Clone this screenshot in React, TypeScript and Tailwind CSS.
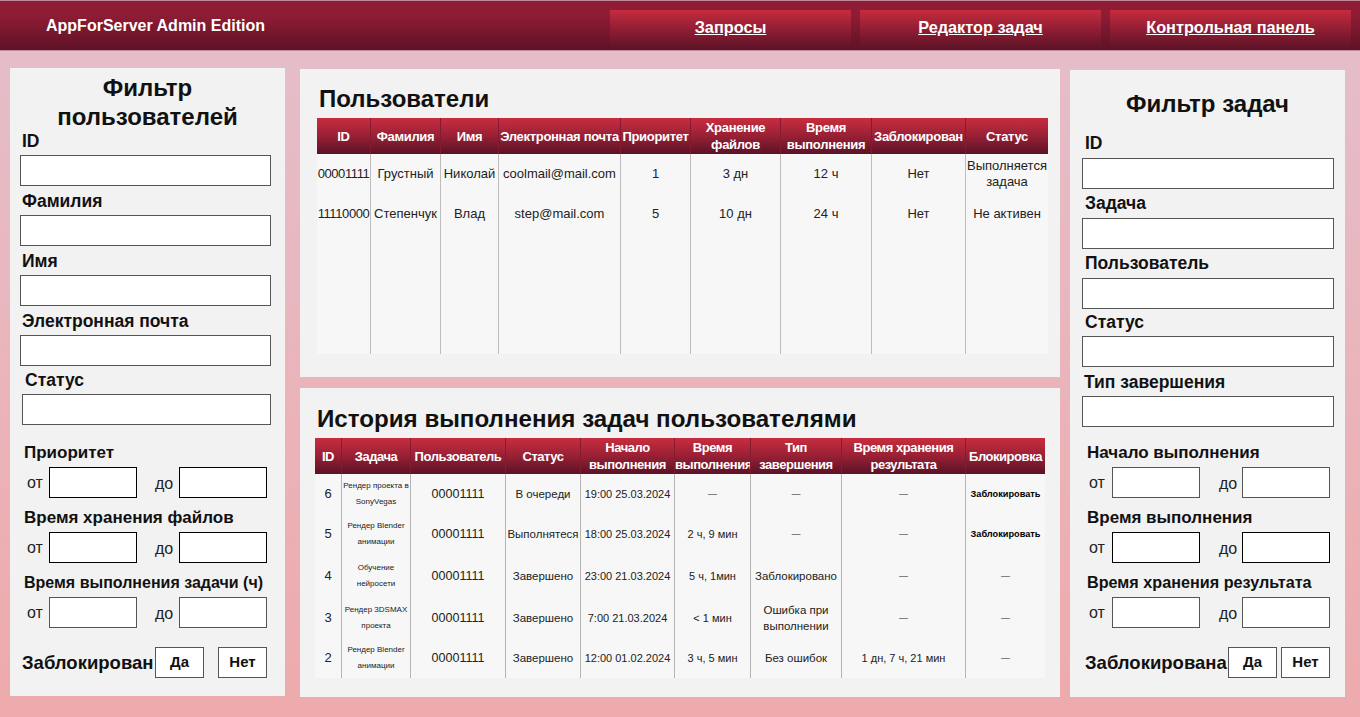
const font = { fontFamily: '"Liberation Sans", Arial, sans-serif' };

const navItems = ["Запросы", "Редактор задач", "Контрольная панель"];

const userCols = [54, 70, 58, 122, 70, 90, 91, 94, 82];
const userHead = ["ID", "Фамилия", "Имя", "Электронная почта", "Приоритет", "Хранение файлов", "Время выполнения", "Заблокирован", "Статус"];
const users = [
  ["00001111", "Грустный", "Николай", "coolmail@mail.com", "1", "3 дн", "12 ч", "Нет", "Выполняется задача"],
  ["11110000", "Степенчук", "Влад", "step@mail.com", "5", "10 дн", "24 ч", "Нет", "Не активен"],
];

const taskCols = [27, 69, 95, 75, 94, 76, 91, 124, 79];
const taskHead = ["ID", "Задача", "Пользователь", "Статус", "Начало выполнения", "Время выполнения", "Тип завершения", "Время хранения результата", "Блокировка"];
const tasks = [
  { h: "h-[40px]", cells: ["6", "Рендер проекта в SonyVegas", "00001111", "В очереди", "19:00 25.03.2024", "—", "—", "—", "Заблокировать"] },
  { h: "h-[40px]", cells: ["5", "Рендер Blender анимации", "00001111", "Выполнятеся", "18:00 25.03.2024", "2 ч, 9 мин", "—", "—", "Заблокировать"] },
  { h: "h-[44px]", cells: ["4", "Обучение нейросети", "00001111", "Завершено", "23:00 21.03.2024", "5 ч, 1мин", "Заблокировано", "—", "—"] },
  { h: "h-[40px]", cells: ["3", "Рендер 3DSMAX проекта", "00001111", "Завершено", "7:00 21.03.2024", "< 1 мин", "Ошибка при выполнении", "—", "—"] },
  { h: "h-[40px]", cells: ["2", "Рендер Blender анимации", "00001111", "Завершено", "12:00 01.02.2024", "3 ч, 5 мин", "Без ошибок", "1 дн, 7 ч, 21 мин", "—"] },
];

function taskCellClass(c: string, i: number) {
  if (c === "—") return "text-[9px]";
  if (i === 0) return "text-[13px]";
  if (i === 1) return "text-[8px] leading-[16px]";
  if (i === 2) return "text-[12.5px]";
  if (i === 4 || i === 5 || i === 7) return "text-[11px]";
  if (i === 8) return "text-[9.2px] font-bold text-black";
  return "";
}

function Field({ label, labelClass = "pl-[2px] leading-[27px]", inputClass = "w-[251px]", rowClass = "mb-[2px]" }: { label: string; labelClass?: string; inputClass?: string; rowClass?: string }) {
  return (
    <div className={rowClass}>
      <div className={`h-[27px] text-[17.5px] font-bold text-[#111] ${labelClass}`}>{label}</div>
      <input className={`block h-[31px] bg-white border border-[#555] ${inputClass}`} />
    </div>
  );
}

function Range({ label, labelClass = "text-[17px]", dark = false, left, otClass, gapClass }: { label: string; labelClass?: string; dark?: boolean; left: string; otClass: string; gapClass: string }) {
  const box = `block h-[31px] w-[88px] bg-white border ${dark ? "border-black" : "border-[#555]"}`;
  return (
    <div className="mb-[7px]">
      <div className={`h-[27px] leading-[25px] font-bold text-[#111] ${labelClass} ${left}`}>{label}</div>
      <div className="flex items-center text-[16px] text-[#222]">
        <span className={`pl-[7px] ${otClass}`}>от</span>
        <input className={box} />
        <span className={`pt-[2px] ${gapClass}`}>до</span>
        <input className={box} />
      </div>
    </div>
  );
}

function HeadCell({ text, last, tight }: { text: string; last: boolean; tight?: boolean }) {
  return (
    <th className={`h-[36px] p-0 bg-linear-to-b from-[#c92d3f] via-[#982035] to-[#5c1226] text-white text-[13px] leading-[17px] font-bold text-center align-middle overflow-hidden ${tight ? "tracking-[-0.45px]" : "tracking-[-0.3px]"} ${last ? "" : "border-r border-[#85192e]"}`}>
      {text}
    </th>
  );
}

export default function App() {
  return (
    <div style={font} className="w-[1360px] h-[717px] overflow-hidden bg-linear-to-b from-[#e4bfcb] to-[#eeaaac]">
      {/* Top bar */}
      <div className="h-[51px] flex border-t border-[#c08a98] border-b bg-linear-to-b from-[#8e1c34] from-30% to-[#5e1226]">
        <div className="w-[610px] pl-[46px] pt-[15px] text-white text-[16px] leading-[20px] font-bold">AppForServer Admin Edition</div>
        <div className="flex gap-[9px] pt-[9px]">
          {navItems.map((item) => (
            <a key={item} className="w-[241px] h-[40px] flex justify-center pt-[7px] bg-linear-to-b from-[#c62c3d] via-[#8f1d33] to-[#5c1226] text-white text-[16.3px] leading-[20px] font-bold underline">
              {item}
            </a>
          ))}
        </div>
      </div>

      <div className="flex pl-[10px]">
        {/* User filter */}
        <aside className="w-[275px] h-[628px] mt-[17px] pl-[10px] bg-[#f2f2f2]">
          <h2 className="h-[60px] pt-[5px] pr-[10px] text-[24px] leading-[29px] font-bold text-center text-[#111]">Фильтр пользователей</h2>
          <Field label="ID" />
          <Field label="Фамилия" />
          <Field label="Имя" />
          <Field label="Электронная почта" rowClass="mb-[1px]" />
          <Field label="Статус" labelClass="pl-[5px] leading-[27px]" inputClass="w-[249px] ml-[2px]" />
          <div className="h-[13px]" />
          <Range label="Приоритет" dark left="pl-[4px]" otClass="w-[29px]" gapClass="w-[42px] pl-[18px]" />
          <Range label="Время хранения файлов" dark left="pl-[4px]" otClass="w-[29px]" gapClass="w-[42px] pl-[18px]" />
          <Range label="Время выполнения задачи (ч)" labelClass="text-[16px]" left="pl-[4px]" otClass="w-[29px]" gapClass="w-[42px] pl-[18px]" />
          <div className="flex items-center mt-[19px]">
            <span className="w-[135px] pl-[2px] text-[18.5px] font-bold text-[#111]">Заблокирован</span>
            <button className="w-[49px] h-[31px] bg-white border border-[#555] text-[15px] font-bold text-[#111]">Да</button>
            <button className="w-[49px] h-[31px] ml-[14px] bg-white border border-[#555] text-[15px] font-bold text-[#111]">Нет</button>
          </div>
        </aside>

        {/* Tables */}
        <main className="w-[760px] ml-[15px] mt-[18px] flex flex-col gap-[11px]">
          <section className="h-[308px] pl-[17px] bg-[#f2f2f2]">
            <h2 className="pt-[15px] mb-[5px] ml-[2px] text-[24px] leading-[29px] font-bold text-[#111]">Пользователи</h2>
            <table className="table-fixed w-[731px] border-separate border-spacing-0">
              <colgroup>
                {userCols.map((w, i) => (
                  <col key={i} style={{ width: w }} />
                ))}
              </colgroup>
              <thead>
                <tr>
                  {userHead.map((t, i) => (
                    <HeadCell key={t} text={t} last={i === userHead.length - 1} />
                  ))}
                </tr>
              </thead>
              <tbody className="bg-[#f7f7f7] text-[13px] leading-[16px] text-[#222] text-center">
                {users.map((row) => (
                  <tr key={row[0]}>
                    {row.map((c, i) => (
                      <td key={i} className={`h-[40px] p-0 overflow-hidden ${i === 0 ? "tracking-[-0.4px]" : ""} ${i < row.length - 1 ? "border-r border-[#bdbdbd]" : ""}`}>
                        {c}
                      </td>
                    ))}
                  </tr>
                ))}
                <tr>
                  {userCols.map((_, i) => (
                    <td key={i} className={`h-[120px] p-0 ${i < userCols.length - 1 ? "border-r border-[#bdbdbd]" : ""}`} />
                  ))}
                </tr>
              </tbody>
            </table>
          </section>

          <section className="h-[309px] pl-[15px] bg-[#f2f2f2]">
            <h2 className="pt-[16px] mb-[5px] ml-[2px] text-[24.15px] leading-[29px] font-bold text-[#111] whitespace-nowrap">История выполнения задач пользователями</h2>
            <table className="table-fixed w-[730px] border-separate border-spacing-0">
              <colgroup>
                {taskCols.map((w, i) => (
                  <col key={i} style={{ width: w }} />
                ))}
              </colgroup>
              <thead>
                <tr>
                  {taskHead.map((t, i) => (
                    <HeadCell key={t} text={t} tight last={i === taskHead.length - 1} />
                  ))}
                </tr>
              </thead>
              <tbody className="bg-[#f7f7f7] text-[11.5px] leading-[16px] text-[#222] text-center">
                {tasks.map((row) => (
                  <tr key={row.cells[0]}>
                    {row.cells.map((c, i) => (
                      <td key={i} className={`${row.h} p-0 overflow-hidden ${taskCellClass(c, i)} ${i < row.cells.length - 1 ? "border-r border-[#b5b5b5]" : ""}`}>
                        {c}
                      </td>
                    ))}
                  </tr>
                ))}
              </tbody>
            </table>
          </section>
        </main>

        {/* Task filter */}
        <aside className="w-[275px] h-[627px] ml-[10px] mt-[19px] pl-[12px] bg-[#f2f2f2]">
          <h2 className="h-[61px] pt-[19px] pr-[12px] text-[24px] leading-[29px] font-bold text-center text-[#111]">Фильтр задач</h2>
          <Field label="ID" labelClass="pl-[3px] leading-[25px]" inputClass="w-[252px]" />
          <Field label="Задача" labelClass="pl-[3px] leading-[25px]" inputClass="w-[252px]" />
          <Field label="Пользователь" labelClass="pl-[3px] leading-[25px]" inputClass="w-[252px]" rowClass="mb-0" />
          <Field label="Статус" labelClass="pl-[3px] leading-[27px]" inputClass="w-[252px]" />
          <Field label="Тип завершения" labelClass="pl-[2px] leading-[27px]" inputClass="w-[252px]" />
          <div className="h-[11px]" />
          <Range label="Начало выполнения" left="pl-[5px]" otClass="w-[30px]" gapClass="w-[42px] pl-[19px]" />
          <Range label="Время выполнения" dark left="pl-[5px]" otClass="w-[30px]" gapClass="w-[42px] pl-[19px]" />
          <Range label="Время хранения результата" labelClass="text-[16.2px]" left="pl-[5px]" otClass="w-[30px]" gapClass="w-[42px] pl-[19px]" />
          <div className="flex items-center mt-[19px]">
            <span className="w-[146px] pl-[3px] text-[18.5px] font-bold text-[#111]">Заблокирована</span>
            <button className="w-[49px] h-[31px] bg-white border border-[#555] text-[15px] font-bold text-[#111]">Да</button>
            <button className="w-[49px] h-[31px] ml-[4px] bg-white border border-[#555] text-[15px] font-bold text-[#111]">Нет</button>
          </div>
        </aside>
      </div>
    </div>
  );
}
